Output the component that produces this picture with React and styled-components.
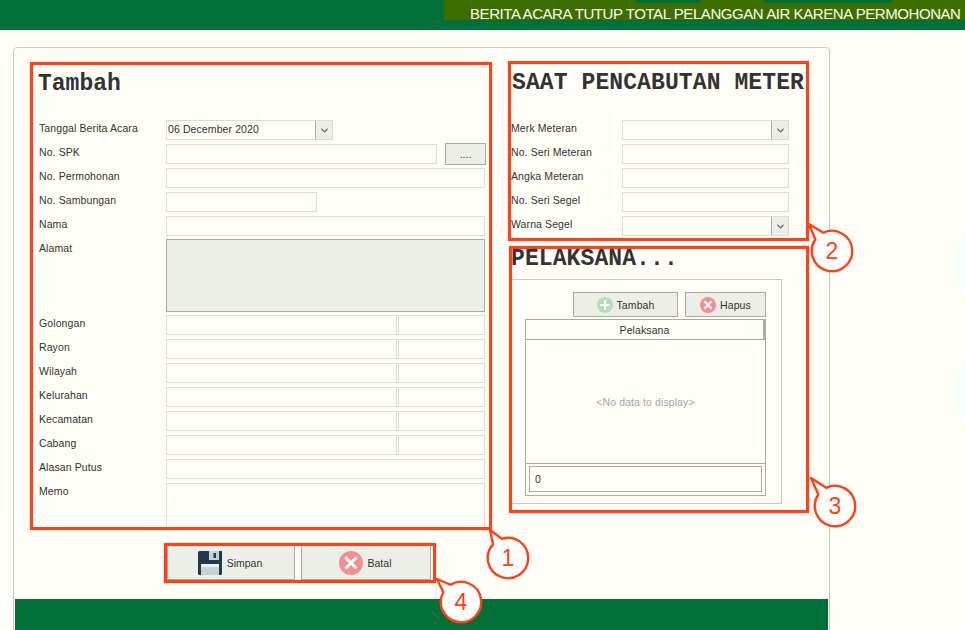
import React from 'react';
import styled, { createGlobalStyle } from 'styled-components';
import { ChevronDown } from 'lucide-react';

const color_bg = '#fffff8';
const color_green = '#007038';
const color_red = '#ff4019';
const color_line = '#dcded5';
const color_frame = '#c9cac2';
const color_btn = '#ecefe7';
const color_btn_line = '#aaaca4';

const GlobalStyle = createGlobalStyle`
  html, body {
    margin: 0;
    padding: 0;
    background: ${color_bg};
    overflow: hidden;
  }
  * {
    box-sizing: border-box;
  }
`;

const mainRows = [
  { label: 'No. Permohonan' },
  { label: 'No. Sambungan', width: 151 },
  { label: 'Nama' },
];

const splitRows = ['Golongan', 'Rayon', 'Wilayah', 'Kelurahan', 'Kecamatan', 'Cabang'];

const Bubble = ({ n, cx, cy, tipX, tipY }) => {
  // svg is 80 square with the circle centred at 40,40, tail runs out to the tip
  const r = 20.2;
  const tx = 40 + tipX - cx;
  const ty = 40 + tipY - cy;
  const angle = Math.atan2(ty - 40, tx - 40);
  const ax = 40 + r * Math.cos(angle + 0.26);
  const ay = 40 + r * Math.sin(angle + 0.26);
  const bx = 40 + r * Math.cos(angle - 0.26);
  const by = 40 + r * Math.sin(angle - 0.26);

  return (
    <BubbleSvg $x={cx - 40} $y={cy - 40} width="80" height="80" viewBox="0 0 80 80">
      <path
        d={`M${tx} ${ty} L${ax} ${ay} A${r} ${r} 0 1 1 ${bx} ${by} Z`}
        fill="#fffffb"
        stroke={color_red}
        strokeWidth="2.4"
        strokeLinejoin="round"
      />
      <BubbleText x="40" y="48" textAnchor="middle">
        {n}
      </BubbleText>
    </BubbleSvg>
  );
};

const CircleIcon = ({ size, fill, kind }) => (
  <svg width={size} height={size} viewBox="0 0 24 24">
    <circle cx="12" cy="12" r="12" fill={fill} />
    <path
      d={kind === 'plus' ? 'M12 6v12M6 12h12' : 'M7.5 7.5l9 9M16.5 7.5l-9 9'}
      stroke="#fff"
      strokeWidth="3"
      strokeLinecap="square"
    />
  </svg>
);

const FloppyIcon = () => (
  <svg width="24" height="24" viewBox="0 0 24 24">
    <path d="M1.5 0H24v22.5a1.5 1.5 0 0 1-1.5 1.5h-21A1.5 1.5 0 0 1 0 22.5v-21A1.5 1.5 0 0 1 1.5 0z" fill="#21394e" />
    <rect x="11" y="0" width="10" height="9" fill="#c5d2d6" />
    <rect x="15.5" y="2" width="2.5" height="5" fill="#21394e" />
    <rect x="3" y="13" width="18" height="11" fill="#c5d2d6" />
    <rect x="3" y="13" width="18" height="3" fill="#eef2f2" />
  </svg>
);

const SelectBox = ({ value, width }) => (
  <Select $width={width}>
    <SelectValue>{value}</SelectValue>
    <SelectArrow>
      <ChevronDown size={11} strokeWidth={3} color="#666" />
    </SelectArrow>
  </Select>
);

const App = () => {
  return (
    <Page>
      <GlobalStyle />
      <Header>
        <TitleBar>
          <TitleNotch $left={192} $width={64} />
          <TitleNotch $left={320} $width={128} />
          <Title>BERITA ACARA TUTUP TOTAL PELANGGAN AIR KARENA PERMOHONAN</Title>
        </TitleBar>
      </Header>

      <Panel>
        <Columns>
          <MainSection>
            <Heading>Tambah</Heading>
            <Form>
              <Row>
                <Label $width={127}>Tanggal Berita Acara</Label>
                <SelectBox value="06 December 2020" width={167} />
              </Row>
              <Row>
                <Label $width={127}>No. SPK</Label>
                <Input $width={271} readOnly />
                <DotsButton>....</DotsButton>
              </Row>
              {mainRows.map((r) => (
                <Row key={r.label}>
                  <Label $width={127}>{r.label}</Label>
                  <Input $width={r.width || 319} readOnly />
                </Row>
              ))}
              <TallRow>
                <Label $width={127}>Alamat</Label>
                <AddressBox readOnly />
              </TallRow>
              {splitRows.map((label) => (
                <Row key={label}>
                  <Label $width={127}>{label}</Label>
                  <Input $width={231} readOnly />
                  <CodeInput readOnly />
                </Row>
              ))}
              <Row>
                <Label $width={127}>Alasan Putus</Label>
                <Input $width={319} readOnly />
              </Row>
              <MemoRow>
                <Label $width={127}>Memo</Label>
                <MemoBox readOnly />
              </MemoRow>
            </Form>
          </MainSection>

          <SideColumn>
            <MeterSection>
              <SideHeading>SAAT PENCABUTAN METER</SideHeading>
              <SideForm>
                <Row>
                  <Label $width={111}>Merk Meteran</Label>
                  <SelectBox width={167} />
                </Row>
                <Row>
                  <Label $width={111}>No. Seri Meteran</Label>
                  <Input $width={167} readOnly />
                </Row>
                <Row>
                  <Label $width={111}>Angka Meteran</Label>
                  <Input $width={167} readOnly />
                </Row>
                <Row>
                  <Label $width={111}>No. Seri Segel</Label>
                  <Input $width={167} readOnly />
                </Row>
                <Row>
                  <Label $width={111}>Warna Segel</Label>
                  <SelectBox width={167} />
                </Row>
              </SideForm>
            </MeterSection>

            <CrewSection>
              <CrewHeading>PELAKSANA...</CrewHeading>
              <CrewFrame>
                <CrewActions>
                  <CrewButton $width={105}>
                    <CircleIcon size={16} fill="#b3ddbb" kind="plus" />
                    Tambah
                  </CrewButton>
                  <CrewButton $width={81}>
                    <CircleIcon size={16} fill="#f58e93" kind="x" />
                    Hapus
                  </CrewButton>
                </CrewActions>
                <Grid>
                  <GridHeader>Pelaksana</GridHeader>
                  <GridBody>&lt;No data to display&gt;</GridBody>
                  <GridFooter>
                    <CountBox>0</CountBox>
                  </GridFooter>
                </Grid>
              </CrewFrame>
            </CrewSection>
          </SideColumn>
        </Columns>

        <ActionBox>
          <ActionButton $width={128}>
            <FloppyIcon />
            Simpan
          </ActionButton>
          <ActionButton $width={130}>
            <CircleIcon size={24} fill="#f58e93" kind="x" />
            Batal
          </ActionButton>
        </ActionBox>

        <PanelFooter />
      </Panel>

      <EdgeGlow $top={228} $height={64} />
      <EdgeGlow $top={357} $height={63} />

      <Bubble n="1" cx={508} cy={558} tipX={490} tipY={530} />
      <Bubble n="2" cx={832} cy={251} tipX={809} tipY={224} />
      <Bubble n="3" cx={835} cy={506} tipX={811} tipY={478} />
      <Bubble n="4" cx={461} cy={602} tipX={437} tipY={579} />
    </Page>
  );
};

export default App;

const Page = styled.div`
  position: relative;
  width: 965px;
  height: 630px;
  overflow: hidden;
  background: ${color_bg};
  font-family: 'Liberation Sans', Arial, sans-serif;
  font-size: 10.5px;
  letter-spacing: 0.1px;
  color: #333;
`;

const Header = styled.header`
  height: 30px;
  background: ${color_green};
  display: flex;
  justify-content: flex-end;
`;

const TitleBar = styled.div`
  position: relative;
  width: 521px;
  height: 20px;
  background: #3c6e00;
  padding-left: 26px;
`;

const TitleNotch = styled.span`
  position: absolute;
  top: 0;
  left: ${(p) => p.$left}px;
  width: ${(p) => p.$width}px;
  height: 3px;
  background: ${color_green};
`;

const Title = styled.h1`
  margin: 0;
  font-size: 15px;
  font-weight: 400;
  line-height: 27px;
  color: #fbffee;
  white-space: nowrap;
  letter-spacing: -0.43px;
`;

const Panel = styled.main`
  width: 817px;
  height: 620px;
  margin: 17px 0 0 13px;
  border: 1px solid ${color_frame};
  border-radius: 4px 4px 0 0;
  display: flex;
  flex-direction: column;
`;

const Columns = styled.div`
  display: flex;
  gap: 16px;
  padding: 13px 0 0 16px;
`;

const MainSection = styled.section`
  width: 462px;
  height: 468px;
  margin-top: 1px;
  border: 3px solid ${color_red};
  box-shadow: 0 0 1px rgba(255, 64, 25, 0.6);
  overflow: hidden;
`;

const Heading = styled.h2`
  margin: 0;
  height: 55px;
  padding-left: 5px;
  font-family: 'Liberation Mono', 'Courier New', monospace;
  font-size: 23px;
  font-weight: 700;
  line-height: 38px;
  letter-spacing: 0;
  color: #333;
`;

const SideHeading = styled(Heading)`
  height: 56px;
  padding-left: 1px;
  letter-spacing: 0.1px;
  white-space: nowrap;
`;

const CrewHeading = styled(SideHeading)`
  height: 30px;
  margin-left: -2px;
  line-height: 20px;
`;

const Form = styled.div`
  display: flex;
  flex-direction: column;
  gap: 4px;
  padding-left: 6px;
`;

const SideForm = styled(Form)`
  padding-left: 0;
`;

const Row = styled.div`
  display: flex;
  height: 20px;
`;

const TallRow = styled(Row)`
  height: 73px;
  margin: -1px 0;

  label {
    padding-top: 1px;
  }
`;

const MemoRow = styled(Row)`
  height: 50px;
`;

const Label = styled.label`
  flex: none;
  width: ${(p) => p.$width}px;
  line-height: 17px;
  white-space: nowrap;
`;

const Input = styled.input`
  flex: none;
  width: ${(p) => p.$width}px;
  height: 20px;
  padding: 0 2px;
  border: 1px solid ${color_line};
  border-radius: 0;
  background: ${color_bg};
  outline: none;
`;

const CodeInput = styled(Input)`
  width: 87px;
  margin-left: 1px;
`;

const DotsButton = styled.button`
  flex: none;
  width: 41px;
  height: 22px;
  margin: -1px 0 0 8px;
  padding: 0;
  border: 1px solid ${color_btn_line};
  background: ${color_btn};
  font: 10.5px 'Liberation Sans', Arial, sans-serif;
  color: #333;
`;

const AddressBox = styled.textarea`
  flex: none;
  width: 319px;
  height: 73px;
  border: 1px solid ${color_btn_line};
  background: ${color_btn};
  resize: none;
  outline: none;
`;

const MemoBox = styled.textarea`
  flex: none;
  width: 319px;
  height: 50px;
  border: 1px solid ${color_line};
  background: ${color_bg};
  resize: none;
  outline: none;
`;

const Select = styled.div`
  flex: none;
  display: flex;
  width: ${(p) => p.$width}px;
  height: 20px;
  border: 1px solid ${color_line};
  background: ${color_bg};
`;

const SelectValue = styled.div`
  flex: 1;
  padding-left: 1px;
  line-height: 17px;
  white-space: nowrap;
`;

const SelectArrow = styled.div`
  flex: none;
  width: 17px;
  display: flex;
  align-items: center;
  justify-content: center;
  border-left: 1px solid ${color_btn_line};
  background: ${color_btn};
`;

const SideColumn = styled.div`
  display: flex;
  flex-direction: column;
  gap: 5px;
  width: 301px;
`;

const MeterSection = styled.section`
  height: 180px;
  border: 3px solid ${color_red};
  box-shadow: 0 0 1px rgba(255, 64, 25, 0.6);
`;

const CrewSection = styled.section`
  width: 300px;
  height: 267px;
  margin-left: 1px;
  border: 3px solid ${color_red};
  box-shadow: 0 0 1px rgba(255, 64, 25, 0.6);
  overflow: hidden;
`;

const CrewFrame = styled.div`
  width: 270px;
  height: 225px;
  padding: 12px 15px 0 13px;
  border: 1px solid ${color_frame};
  border-left: none;
`;

const CrewActions = styled.div`
  display: flex;
  justify-content: flex-end;
  gap: 7px;
  margin-bottom: 2px;
`;

const CrewButton = styled.button`
  display: flex;
  align-items: center;
  justify-content: center;
  gap: 4px;
  width: ${(p) => p.$width}px;
  height: 25px;
  padding: 0;
  border: 1px solid ${color_btn_line};
  background: ${color_btn};
  font: 10.5px 'Liberation Sans', Arial, sans-serif;
  letter-spacing: 0.1px;
  color: #333;
`;

const Grid = styled.div`
  display: flex;
  flex-direction: column;
  width: 241px;
  height: 177px;
  border: 1px solid ${color_btn_line};
`;

const GridHeader = styled.div`
  height: 20px;
  border-bottom: 1px solid ${color_btn_line};
  border-right: 2px solid ${color_btn_line};
  text-align: center;
  line-height: 20px;
`;

const GridBody = styled.div`
  flex: 1;
  display: flex;
  align-items: center;
  justify-content: center;
  color: #a5a5ad;
`;

const GridFooter = styled.div`
  flex: none;
  height: 32px;
  padding: 2px 3px 0;
  border-top: 1px solid ${color_btn_line};
`;

const CountBox = styled.div`
  height: 26px;
  padding-left: 5px;
  border: 1px solid ${color_btn_line};
  line-height: 24px;
`;

const ActionBox = styled.div`
  display: flex;
  justify-content: space-between;
  align-self: flex-start;
  width: 272px;
  height: 40px;
  margin: 13px 0 0 150px;
  border: 3px solid ${color_red};
  box-shadow: 0 0 1px rgba(255, 64, 25, 0.6);
  padding-right: 2px;
`;

const ActionButton = styled.button`
  display: flex;
  align-items: center;
  justify-content: center;
  gap: 5px;
  width: ${(p) => p.$width}px;
  height: 34px;
  padding: 0 2px 0 0;
  border: 1px solid ${color_btn_line};
  border-top: none;
  background: ${color_btn};
  font: 10.5px 'Liberation Sans', Arial, sans-serif;
  color: #333;
`;

const PanelFooter = styled.div`
  height: 60px;
  margin: 16px 1px 0;
  background: ${color_green};
`;

const EdgeGlow = styled.div`
  position: absolute;
  right: 0;
  top: ${(p) => p.$top}px;
  width: 8px;
  height: ${(p) => p.$height}px;
  background: #f9fffb;
`;

const BubbleSvg = styled.svg`
  position: absolute;
  left: ${(p) => p.$x}px;
  top: ${(p) => p.$y}px;
  overflow: visible;
`;

const BubbleText = styled.text`
  font-family: 'Liberation Sans', Arial, sans-serif;
  font-size: 23px;
  letter-spacing: 0;
  fill: ${color_red};
`;
